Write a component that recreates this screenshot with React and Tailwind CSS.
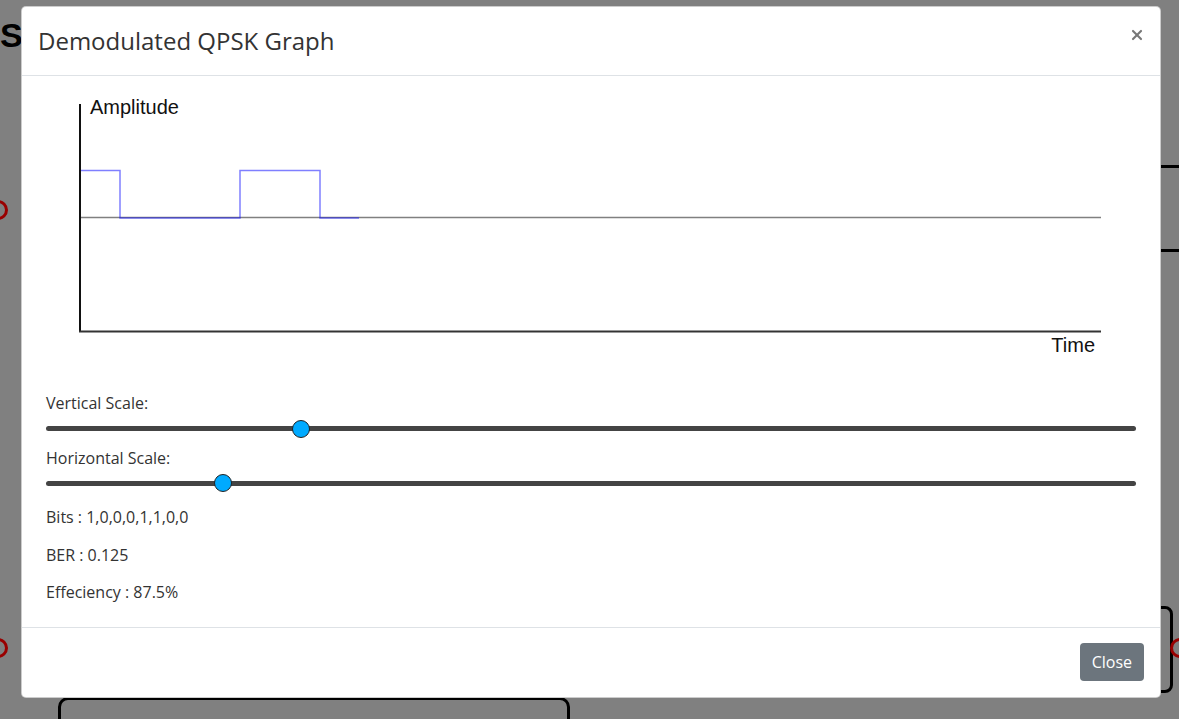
import { X } from "lucide-react";

const Slider = ({ pos }) => {
  return (
    <div className="relative h-[28px] flex items-center">
      <div className="w-full h-[5px] rounded-full bg-[#444]" />
      <div
        className="absolute top-1/2 w-[18px] h-[18px] -mt-[9px] -ml-[9px] rounded-full bg-[#00aaff] border border-[#222]"
        style={{ left: pos }}
      />
    </div>
  );
};

const Graph = () => {
  return (
    <svg width="1090" height="300" className="block" style={{ fontFamily: "'Liberation Sans', Arial, sans-serif" }}>
      <line x1="34" y1="12" x2="34" y2="240" stroke="#111" strokeWidth="2" />
      <line x1="33" y1="239.5" x2="1055" y2="239.5" stroke="#333" strokeWidth="2" />
      <line x1="35" y1="125.5" x2="1055" y2="125.5" stroke="#808080" strokeWidth="1.5" />
      <polyline
        points="35,78.5 74,78.5 74,126 194,126 194,78.5 274,78.5 274,126 313,126"
        fill="none"
        stroke="rgba(0,0,255,0.5)"
        strokeWidth="1.5"
      />
      <text x="44" y="22" fontSize="20" fill="#111">Amplitude</text>
      <text x="1049" y="260" fontSize="20" fill="#111" textAnchor="end">Time</text>
    </svg>
  );
};

const App = () => {
  return (
    <div className="relative w-[1179px] h-[719px] overflow-hidden bg-[#808080]" style={{ fontFamily: "'Open Sans', sans-serif" }}>
      {/* page behind the overlay */}
      <div className="absolute left-0 top-[10px] text-[34px] font-bold text-black" style={{ fontFamily: "'Liberation Sans', Arial, sans-serif" }}>
        Sc
      </div>
      <div className="absolute left-[-12px] top-[200px] w-[20px] h-[20px] rounded-full border-[3px] border-[#990000]" />
      <div className="absolute left-[-12px] top-[638px] w-[20px] h-[20px] rounded-full border-[3px] border-[#990000]" />
      <div className="absolute left-[1150px] top-[165px] w-[60px] h-[87px] rounded-[8px] border-[3px] border-black" />
      <div className="absolute left-[1100px] top-[606px] w-[73px] h-[87px] rounded-[8px] border-[3px] border-black" />
      <div className="absolute left-[1170px] top-[638px] w-[20px] h-[20px] rounded-full border-[3px] border-[#990000]" />
      <div className="absolute left-[58px] top-[697px] w-[512px] h-[60px] rounded-[10px] border-[3px] border-black" />

      {/* modal */}
      <div className="absolute left-[21px] top-[6px] w-[1140px] bg-white rounded-[5px] border border-black/20 text-[#333]">
        <div className="flex items-center justify-between h-[69px] px-4 border-b border-[#dee2e6]">
          <h4 className="text-[24px] leading-[36px] text-[#333]">Demodulated QPSK Graph</h4>
          <X size={16} strokeWidth={3.2} className="text-[#777] -mr-[1px] -mt-[12px]" />
        </div>
        <div className="px-6 pt-4 pb-[8px] text-[16px] leading-[22.5px]">
          <Graph />
          <div>Vertical Scale:</div>
          <Slider pos="255px" />
          <div className="mt-[4px]">Horizontal Scale:</div>
          <Slider pos="177px" />
          <div className="mt-[9px] mb-[15px]">Bits : 1,0,0,0,1,1,0,0</div>
          <div className="mb-[15px]">BER : 0.125</div>
          <div className="mb-[15px]">Effeciency : 87.5%</div>
        </div>
        <div className="flex justify-end items-center h-[70px] px-4 border-t border-[#dee2e6]">
          <button className="h-[38px] px-3 rounded-[4px] bg-[#6c757d] text-white text-[16px]">Close</button>
        </div>
      </div>
    </div>
  );
};

export default App;
